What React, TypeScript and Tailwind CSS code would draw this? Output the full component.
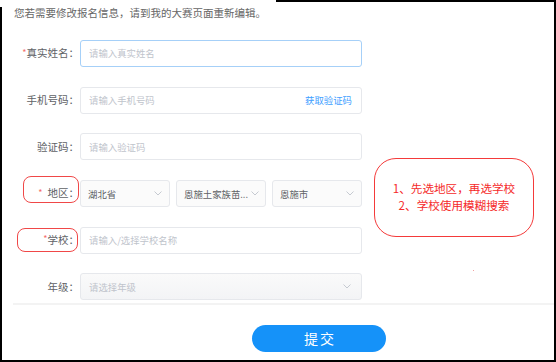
import React from "react";

const font = { fontFamily: '"Noto Sans CJK SC", "Noto Sans", sans-serif' };

function Chevron() {
  return (
    <svg width="8" height="5" viewBox="0 0 8 5" className="shrink-0">
      <polyline points="0.5,0.5 4,4 7.5,0.5" fill="none" stroke="#c0c4cc" strokeWidth="0.9" />
    </svg>
  );
}

function Label({ children, star, spaced }: { children: React.ReactNode; star?: boolean; spaced?: boolean }) {
  return (
    <div className="w-[79px] shrink-0 flex justify-end items-center text-[10.5px] text-[#606266] leading-none">
      {star && <span className={`text-[#f56c6c] text-[9px] -mt-[3px] ${spaced ? "mr-[5px]" : ""}`}>*</span>}
      <span>{children}</span>
    </div>
  );
}

function TextInput({ placeholder, focused, extra }: { placeholder: string; focused?: boolean; extra?: React.ReactNode }) {
  return (
    <div
      className={`ml-[1px] w-[282px] h-[27px] rounded-[3px] border bg-white flex items-center pl-[8px] pr-[9px] ${
        focused ? "border-[#a6d0f8]" : "border-[#e6e8ec]"
      }`}
    >
      <input
        className="flex-1 min-w-0 bg-transparent outline-none text-[9.4px] text-[#606266] placeholder:text-[#c0c4cc]"
        placeholder={placeholder}
      />
      {extra}
    </div>
  );
}

function Select({ value }: { value: string }) {
  return (
    <div className="w-[90px] h-[27px] rounded-[3px] border border-[#e6e8ec] bg-[#fbfbfb] flex items-center pl-[7px] pr-[7px] gap-[3px]">
      <span className="flex-1 whitespace-nowrap text-[9.4px] text-[#606266]">{value}</span>
      <Chevron />
    </div>
  );
}

export default function App() {
  return (
    <div className="w-[556px] h-[362px] bg-white relative overflow-hidden" style={font}>
      <div className="pl-[14px] pt-[5px] text-[10.5px] leading-[16px] text-[#666]">
        您若需要修改报名信息，请到我的大赛页面重新编辑。
      </div>

      <div className="mt-[19px] flex flex-col gap-[19.7px]">
        <div className="flex items-center h-[27px]">
          <Label star>真实姓名：</Label>
          <TextInput placeholder="请输入真实姓名" focused />
        </div>
        <div className="flex items-center h-[27px]">
          <Label>手机号码：</Label>
          <TextInput
            placeholder="请输入手机号码"
            extra={<span className="text-[9.4px] text-[#409eff] whitespace-nowrap">获取验证码</span>}
          />
        </div>
        <div className="flex items-center h-[27px]">
          <Label>验证码：</Label>
          <TextInput placeholder="请输入验证码" />
        </div>
        <div className="flex items-center h-[27px]">
          <Label star spaced>地区：</Label>
          <div className="ml-[1px] w-[282px] flex gap-[6px]">
            <Select value="湖北省" />
            <Select value="恩施土家族苗..." />
            <Select value="恩施市" />
          </div>
        </div>
        <div className="flex items-center h-[27px]">
          <Label star>学校：</Label>
          <TextInput placeholder="请输入/选择学校名称" />
        </div>
        <div className="flex items-center h-[27px]">
          <Label>年级：</Label>
          <div className="ml-[1px] w-[282px] h-[27px] rounded-[3px] border border-[#e6e8ec] bg-gradient-to-b from-[#fafafa] to-[#f3f4f6] flex items-center pl-[8px] pr-[10px]">
            <span className="flex-1 text-[9.4px] text-[#c0c4cc]">请选择年级</span>
            <Chevron />
          </div>
        </div>
      </div>

      <div className="mt-[3px] ml-[13px] h-[2px] bg-[#f3f3f3]" />

      <div className="mt-[20px] ml-[252px] w-[134px] h-[27px] rounded-full bg-[#1592f9] flex items-center justify-center text-white text-[14px] tracking-[2px] pl-[2px]">
        提交
      </div>

      {/* annotations drawn over the screenshot */}
      <div className="absolute left-[23px] top-[176px] w-[56px] h-[27px] rounded-[8px] border-[1.5px] border-[#f04848]" />
      <div className="absolute left-[17px] top-[228px] w-[61px] h-[24px] rounded-[8px] border-[1.5px] border-[#f04848]" />
      <div className="absolute left-[374px] top-[158px] w-[160px] h-[79px] rounded-[22px] border border-[#f43a3a] flex flex-col items-center justify-center text-[11.6px] leading-[16.6px] text-[#f52a2a] pb-[2px]">
        <span>1、先选地区，再选学校</span>
        <span>2、学校使用模糊搜索</span>
      </div>
      <div className="absolute left-[473px] top-[270px] w-[1px] h-[1px] bg-[#f2a0a0]" />

      {/* frame of the screenshot */}
      <div className="absolute left-0 top-[7px] bottom-0 w-[2px] bg-black" />
      <div className="absolute right-0 top-0 bottom-0 w-[2px] bg-black" />
      <div className="absolute left-0 right-0 bottom-0 h-[2px] bg-black" />
      <div className="absolute left-[276px] right-0 top-0 h-[2px] bg-black" />
    </div>
  );
}
